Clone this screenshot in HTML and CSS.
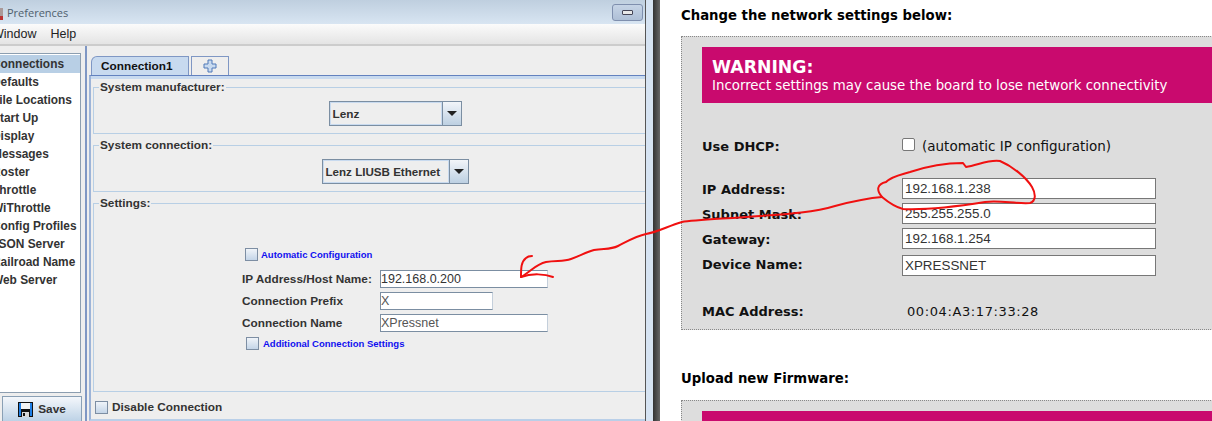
FILE: index.html
```html
<!DOCTYPE html>
<html lang="en">
<head>
    <meta charset="UTF-8">
    <meta name="viewport" content="width=device-width, initial-scale=1.0">
    <title>Preferences</title>
    <link rel="stylesheet" href="styles.css">
</head>
<body>
    <div class="app">
        <div class="titlebar">
            <svg class="app-icon" width="4" height="16" viewBox="0 0 4 16"><rect width="3" height="8" y="4" fill="#a99"/><rect width="3" height="4" y="12" fill="#b33"/></svg>
            <span class="title">Preferences</span>
            <button class="min-btn"><span></span></button>
        </div>
        <div class="menubar">
            <span class="menu-window">Window</span>
            <span>Help</span>
        </div>
        <div class="app-body">
            <div class="side">
                <ul class="side-list">
                    <li class="selected">Connections</li>
                    <li>Defaults</li>
                    <li>File Locations</li>
                    <li>Start Up</li>
                    <li>Display</li>
                    <li>Messages</li>
                    <li>Roster</li>
                    <li>Throttle</li>
                    <li>WiThrottle</li>
                    <li>Config Profiles</li>
                    <li>JSON Server</li>
                    <li>Railroad Name</li>
                    <li>Web Server</li>
                </ul>
                <button class="save-btn">
                    <svg width="15" height="15" viewBox="0 0 15 15"><rect width="15" height="15" fill="#111"/><rect x="1" y="1" width="2" height="13" fill="#1e7fe6"/><rect x="12" y="1" width="2" height="13" fill="#1e7fe6"/><rect x="3" y="1" width="9" height="6" fill="#f4f4f4"/><rect x="4" y="10" width="7" height="5" fill="#d8d8d8"/><rect x="5" y="11" width="2" height="3" fill="#111"/></svg>
                    Save
                </button>
            </div>
            <div class="main">
                <div class="tabs">
                    <div class="tab active">Connection1</div>
                    <div class="tab plus">
                        <svg width="14" height="14" viewBox="0 0 14 14"><path d="M5 1h4v4h4v4H9v4H5V9H1V5h4z" fill="#c8daef" stroke="#4f78b8" stroke-width="1"/></svg>
                    </div>
                </div>
                <div class="tab-panel">
                    <fieldset class="group group-small">
                        <legend>System manufacturer:</legend>
                        <div class="combo-row">
                            <div class="combo combo-lenz">
                                <span class="combo-text">Lenz</span>
                                <span class="combo-btn"><i></i></span>
                            </div>
                        </div>
                    </fieldset>
                    <fieldset class="group group-small">
                        <legend>System connection:</legend>
                        <div class="combo-row">
                            <div class="combo combo-liusb">
                                <span class="combo-text">Lenz LIUSB Ethernet</span>
                                <span class="combo-btn"><i></i></span>
                            </div>
                        </div>
                    </fieldset>
                    <fieldset class="group group-settings">
                        <legend>Settings:</legend>
                        <div class="check-row auto-row">
                            <span class="check"></span>
                            <span class="link-label">Automatic Configuration</span>
                        </div>
                        <div class="field-row">
                            <label>IP Address/Host Name:</label>
                            <div class="text-box wide">192.168.0.200</div>
                        </div>
                        <div class="field-row">
                            <label>Connection Prefix</label>
                            <div class="text-box short muted">X</div>
                        </div>
                        <div class="field-row">
                            <label>Connection Name</label>
                            <div class="text-box wide muted">XPressnet</div>
                        </div>
                        <div class="check-row extra-row">
                            <span class="check"></span>
                            <span class="link-label">Additional Connection Settings</span>
                        </div>
                    </fieldset>
                    <div class="disable-row">
                        <span class="check"></span>
                        <span>Disable Connection</span>
                    </div>
                </div>
            </div>
        </div>
    </div>
    <div class="gutter"></div>
    <div class="shade"></div>

    <div class="page">
        <h3>Change the network settings below:</h3>
        <div class="box">
            <div class="warning">
                <strong>WARNING:</strong>
                <span>Incorrect settings may cause the board to lose network connectivity</span>
            </div>
            <div class="dhcp-row">
                <b>Use DHCP:</b>
                <div class="dhcp-value"><span class="web-check"></span>(automatic IP configuration)</div>
            </div>
            <div class="net-row first">
                <b>IP Address:</b>
                <div class="net-input">192.168.1.238</div>
            </div>
            <div class="net-row">
                <b>Subnet Mask:</b>
                <div class="net-input">255.255.255.0</div>
            </div>
            <div class="net-row">
                <b>Gateway:</b>
                <div class="net-input">192.168.1.254</div>
            </div>
            <div class="net-row device">
                <b>Device Name:</b>
                <div class="net-input">XPRESSNET</div>
            </div>
            <div class="mac-row">
                <b>MAC Address:</b>
                <span>00:04:A3:17:33:28</span>
            </div>
        </div>
        <h3 class="upload">Upload new Firmware:</h3>
        <div class="box">
            <div class="warning"></div>
        </div>
    </div>

    <svg class="scribble" width="1212" height="421" viewBox="0 0 1212 421">
        <path d="M553 277C545 274 532 273 521 277C521 268 521 262 526 258C528 256 530 256 532 256"/>
        <path d="M521 277C530 272 536 264 546 262C556 260 563 262 571 259C580 256 586 252 594 250C603 248 610 250 618 246C628 241 636 236 646 234C658 232 668 226 682 222C694 220 720 219 760 216C790 214 815 212 835 206C850 202 868 198 882 197"/>
        <path d="M882 197C876 190 877 184 886 182C892 176 900 175 910 172C925 167 945 163 963 163L966 167C978 165 990 159 1000 161C1012 166 1026 177 1032 187C1036 194 1036 201 1030 203C1015 204 1000 200 985 202C960 206 925 210 903 209C895 207 888 202 882 197Z"/>
    </svg>
</body>
</html>
```

FILE: styles.css
```css
* {
    box-sizing: border-box;
}

html, body {
    height: 421px;
}

body {
    margin: 0;
    width: 1212px;
    overflow: hidden;
    display: flex;
    position: relative;
    background: white;
    font-family: "Liberation Sans", Arial, sans-serif;
}

/* left window */
.app {
    width: 646px;
    height: 421px;
    flex: none;
    overflow: hidden;
    background: #eee;
    border-right: 1px solid #555;
}

.titlebar {
    height: 24px;
    display: flex;
    align-items: center;
    background: linear-gradient(#bfcfdf, #d8e5f2);
}

.app-icon {
    margin-right: 3px;
}

.title {
    font-family: "Open Sans", sans-serif;
    font-size: 11px;
    color: #4f5f6e;
}

.min-btn {
    width: 31px;
    height: 17px;
    margin-left: auto;
    margin-right: 2px;
    padding: 0;
    display: flex;
    align-items: center;
    justify-content: center;
    border: 1px solid #7f8fae;
    border-radius: 3px;
    background: linear-gradient(#c6d4e6, #aebfd6);
}

.min-btn span {
    width: 11px;
    height: 5px;
    border: 1px solid #445;
    border-radius: 1px;
    background: #e8e8e8;
}

.menubar {
    height: 22px;
    display: flex;
    align-items: center;
    gap: 14px;
    font-size: 12.5px;
    color: #222;
    border-bottom: 2px solid #ccc;
    background: linear-gradient(#fbfbfb, #e4e4e4);
}

.menu-window {
    margin-left: -8px;
}

.app-body {
    display: flex;
    height: 375px;
}

.side {
    width: 87px;
    flex: none;
    padding-top: 7px;
    border-right: 2px solid #7f97c4;
}

.side-list {
    list-style: none;
    width: 81px;
    height: 340px;
    margin: 0;
    padding: 1px 0 0;
    overflow: hidden;
    background: white;
    border: 1px solid #8c9eb0;
    border-left: none;
    font-size: 11.9px;
    font-weight: bold;
    color: #333;
}

.side-list li {
    height: 18px;
    line-height: 18px;
    white-space: nowrap;
    text-indent: -8px;
}

.side-list li.selected {
    background: #b8cfe5;
}

.save-btn {
    width: 80px;
    height: 26px;
    margin: 3px 0 0 2px;
    padding: 0;
    display: flex;
    align-items: center;
    justify-content: center;
    gap: 5px;
    border: 1px solid #8aa0b5;
    background: linear-gradient(#f4f7fb, #bdd2e6);
    font-family: inherit;
    font-size: 11.8px;
    font-weight: bold;
    color: #333;
}

.main {
    flex: 1;
    min-width: 0;
    padding: 10px 0 0 2px;
    font-size: 11.8px;
    font-weight: bold;
    color: #333;
}

.tabs {
    display: flex;
    height: 19px;
    padding-left: 2px;
    gap: 2px;
}

.tab {
    display: flex;
    align-items: center;
    justify-content: center;
    border: 1px solid #7f97c4;
    border-bottom: none;
    background: #eee;
}

.tab.active {
    width: 98px;
    justify-content: flex-start;
    padding-left: 9px;
    background: #c8daef;
    color: #111;
    border-radius: 6px 0 0 0;
}

.tab.plus {
    width: 38px;
}

.tab-panel {
    height: 346px;
    padding: 4px 0 0 2px;
    border-top: 1px solid #6382bf;
    border-left: 2px solid #9db4d8;
    border-bottom: 2px solid #b9cfe8;
    box-shadow: inset 0 3px 0 #c8daef;
}

.group {
    margin: 0;
    padding: 0;
    min-width: 0;
    border: 1px solid #b8cfe5;
    border-right: none;
}

.group legend {
    margin-left: 5px;
    padding: 0 1px;
    line-height: 14px;
}

.group-small {
    height: 54px;
    margin-bottom: 4px;
}

.group-settings {
    height: 196px;
    margin-top: 0;
}

.combo-row {
    display: flex;
    justify-content: center;
    padding-left: 51px;
    margin-top: 7px;
}

.combo {
    display: flex;
    height: 25px;
    border: 1px solid #7b8ea2;
    background: #eee;
}

.combo-lenz {
    width: 133px;
}

.combo-liusb {
    width: 147px;
    font-size: 11.6px;
}

.combo-text {
    flex: 1;
    padding-left: 2px;
    line-height: 22px;
    border: 1px solid #c8daef;
    white-space: nowrap;
}

.combo-btn {
    width: 19px;
    display: flex;
    align-items: center;
    justify-content: center;
    border-left: 1px solid #7b8ea2;
    background: linear-gradient(#f2f5f9, #bdd0e2);
}

.combo-btn i {
    width: 0;
    height: 0;
    border-left: 5px solid transparent;
    border-right: 5px solid transparent;
    border-top: 5px solid #222;
}

.check {
    width: 13px;
    height: 13px;
    flex: none;
    border: 1px solid #7d8ea3;
    background: linear-gradient(#f0f4f9, #c4d5e8);
}

.check-row {
    display: flex;
    align-items: center;
    height: 13px;
}

.link-label {
    font-size: 9.5px;
    color: #1010f0;
}

.auto-row {
    margin: 38px 0 9px 151px;
    gap: 3px;
}

.extra-row {
    margin: 5px 0 0 152px;
    gap: 4px;
}

.field-row {
    display: flex;
    align-items: center;
    height: 18px;
    margin: 0 0 4px 148px;
}

.field-row label {
    width: 138px;
    flex: none;
}

.text-box {
    height: 18px;
    line-height: 16px;
    font-weight: normal;
    font-size: 12.5px;
    color: #333;
    background: white;
    border: 1px solid #7b8ea2;
    border-right-color: #c4cfdb;
    border-bottom-color: #7b8ea2;
}

.text-box.wide {
    width: 168px;
}

.text-box.short {
    width: 113px;
}

.muted {
    color: #555;
}

.disable-row {
    display: flex;
    align-items: center;
    gap: 4px;
    margin: 8px 0 0 2px;
}

/* divider between the two windows */
.gutter {
    width: 7px;
    flex: none;
    background: #d6e3f2;
}

.shade {
    width: 7px;
    flex: none;
    background: linear-gradient(to right, #333, #666);
}

/* right web page */
.page {
    flex: 1;
    min-width: 0;
    padding-left: 21px;
    font-family: "DejaVu Sans", Verdana, sans-serif;
    font-size: 13px;
    color: #111;
    overflow: hidden;
}

.page h3 {
    margin: 0;
    padding-top: 8px;
    height: 36px;
    font-size: 13.25px;
    line-height: 15px;
    color: #000;
}

.page h3.upload {
    margin-top: 41px;
    height: 29px;
    padding-top: 0;
}

.box {
    width: 560px;
    height: 294px;
    padding: 10px 0 0 20px;
    background: #ddd;
    border: 1px dotted #888;
}

.warning {
    width: 530px;
    height: 56px;
    padding: 10px 10px;
    background: #c90a6e;
    color: white;
}

.warning strong {
    display: block;
    font-size: 17.3px;
    line-height: 20px;
}

.warning span {
    display: block;
    font-size: 13.35px;
    line-height: 17px;
}

.dhcp-row, .net-row, .mac-row {
    display: flex;
    align-items: center;
}

.dhcp-row b, .net-row b, .mac-row b {
    width: 200px;
    flex: none;
}

.dhcp-row {
    height: 16px;
    margin-top: 35px;
}

.dhcp-value {
    display: flex;
    align-items: center;
    font-size: 13.5px;
}

.web-check {
    width: 13px;
    height: 13px;
    margin-right: 7px;
    margin-top: -3px;
    background: white;
    border: 1px solid #777;
    border-radius: 2px;
}

.net-row {
    height: 21px;
    margin-bottom: 4px;
}

.net-row b {
    padding-top: 2px;
}

.net-row.first {
    margin-top: 24px;
}

.net-row.device {
    margin-top: 6px;
}

.net-row.device b {
    padding: 0 0 2px;
}

.net-input {
    width: 254px;
    height: 21px;
    padding-left: 2px;
    font-family: "Liberation Sans", Arial, sans-serif;
    font-size: 13.4px;
    line-height: 19px;
    color: #333;
    background: white;
    border: 1px solid #777;
}

.mac-row {
    margin-top: 27px;
    height: 16px;
}

.mac-row span {
    margin-left: 5px;
    letter-spacing: 0.6px;
}

/* red pen marks over both windows */
.scribble {
    position: absolute;
    left: 0;
    top: 0;
    pointer-events: none;
}

.scribble path {
    fill: none;
    stroke: #f01010;
    stroke-width: 2;
    stroke-linecap: round;
    stroke-linejoin: round;
}
```
